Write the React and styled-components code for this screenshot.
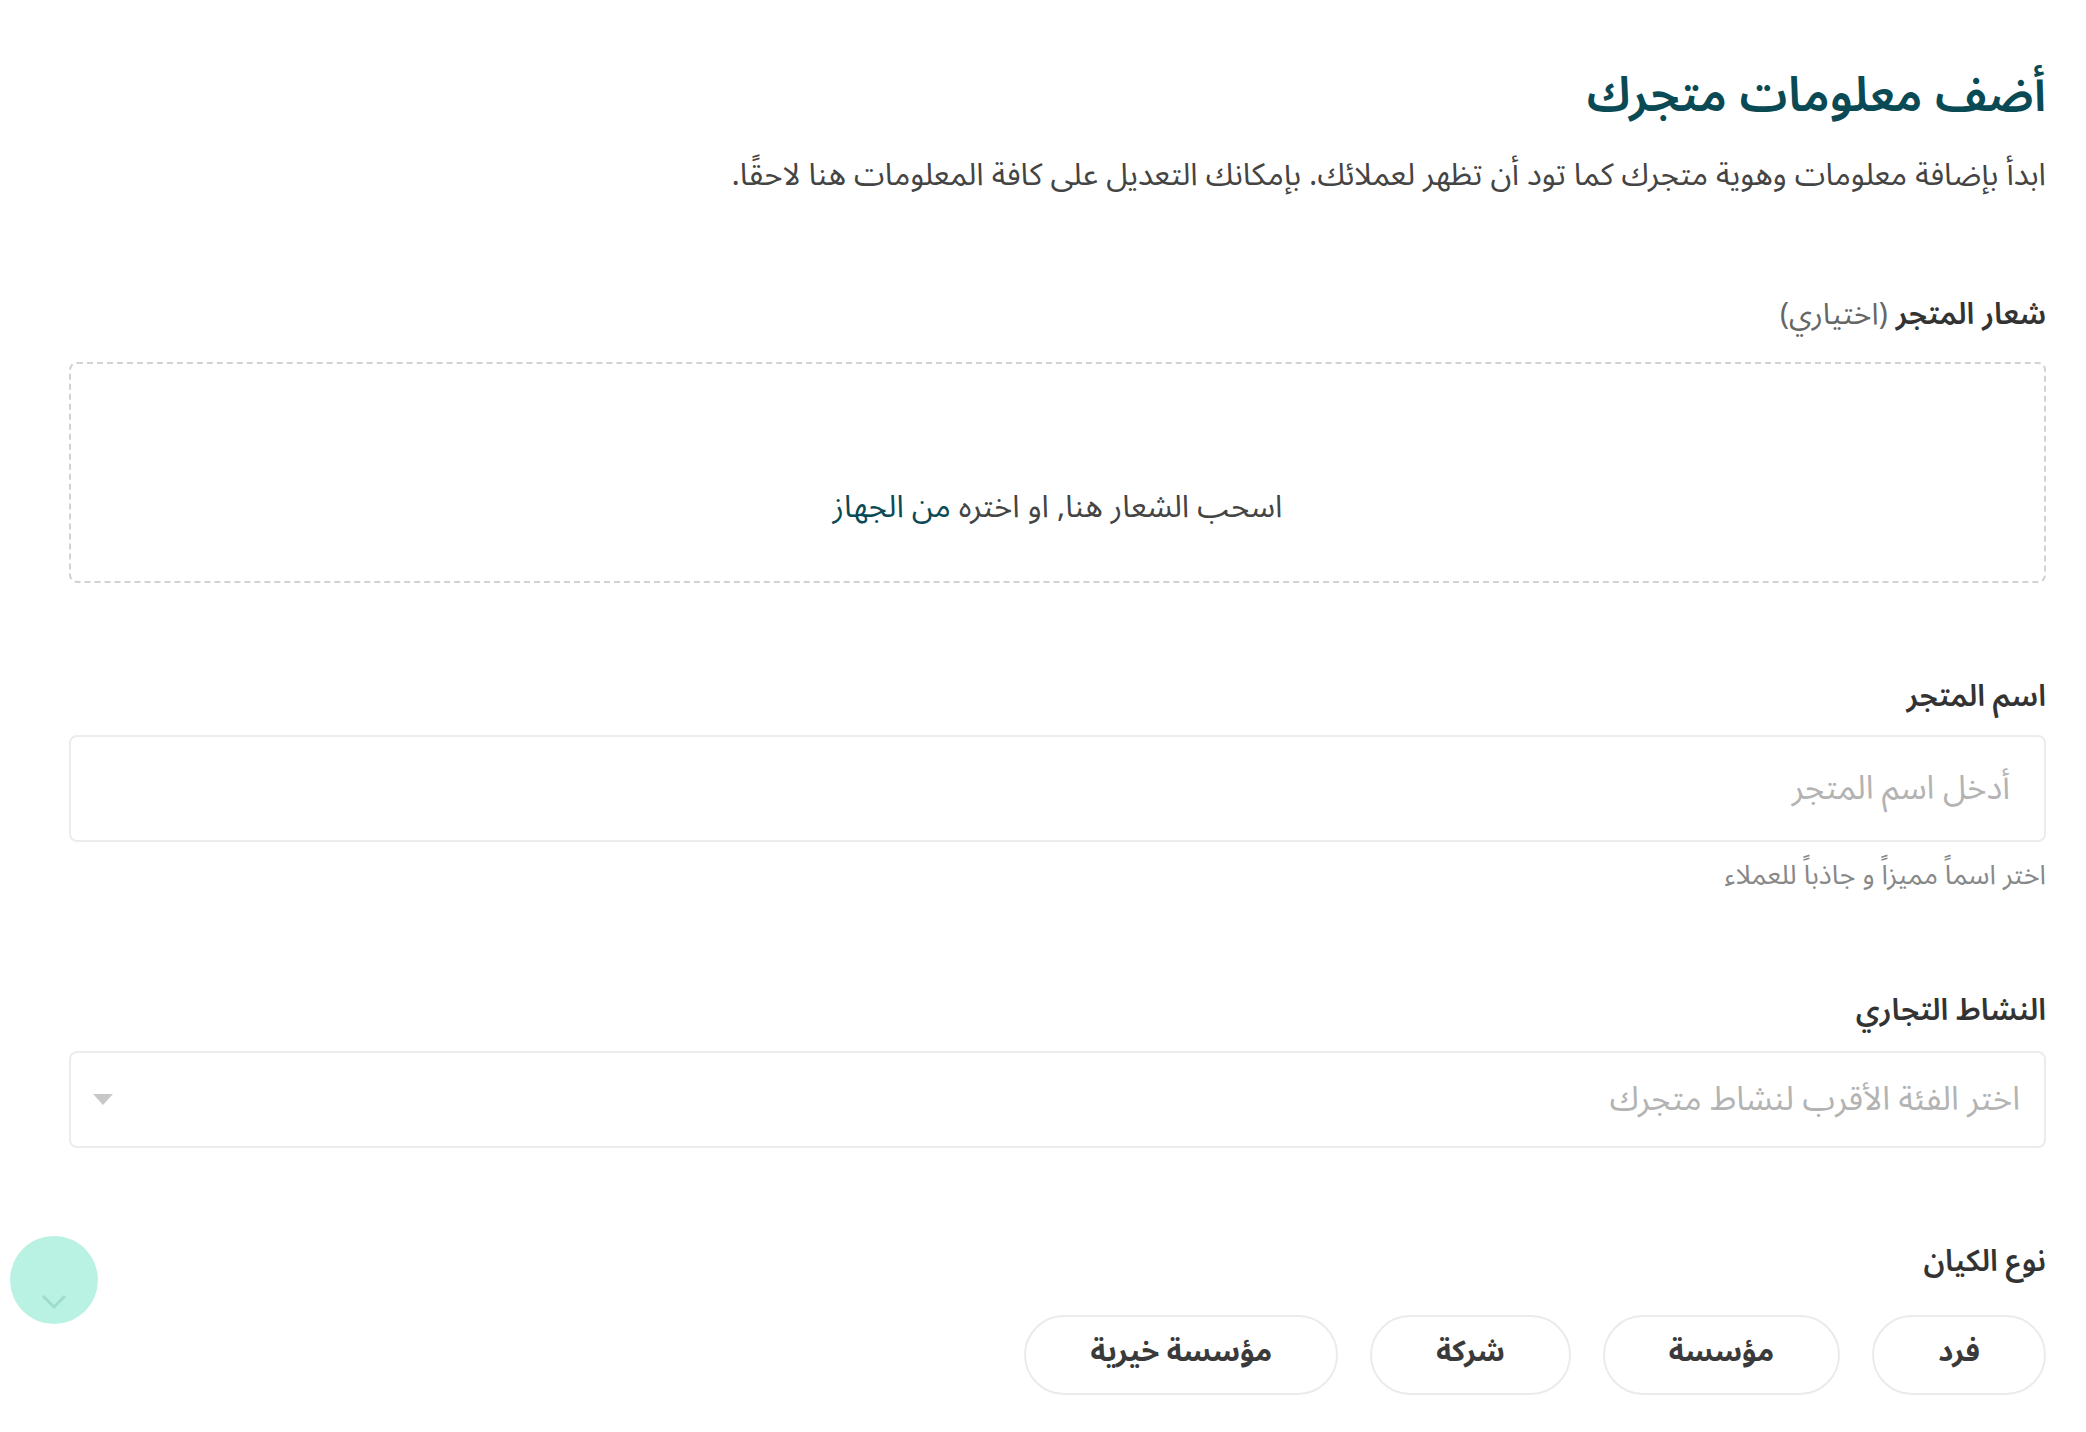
import React from "react";
import styled, { createGlobalStyle } from "styled-components";

const GlobalStyle = createGlobalStyle`
  html, body {
    margin: 0;
    padding: 0;
    background: #ffffff;
  }
  body {
    font-family: "Noto Sans Arabic", "Noto Sans", "DejaVu Sans", sans-serif;
    color: #333333;
  }
  * {
    box-sizing: border-box;
  }
`;

const Page = styled.div`
  direction: rtl;
  padding: 66px 40px 60px 69px;
  display: flex;
  flex-direction: column;
`;

const Title = styled.h1`
  margin: 0;
  font-size: 48px;
  line-height: 60px;
  font-weight: 600;
  color: #0a4a55;
`;

const Subtitle = styled.p`
  margin: 31px 0 0;
  font-size: 31px;
  line-height: 36px;
  color: #444444;
`;

const Field = styled.div`
  display: flex;
  flex-direction: column;
  margin-top: ${({ $top }) => $top}px;
`;

const Label = styled.label`
  font-size: 30px;
  line-height: 36px;
  font-weight: 600;
  color: #333333;
  margin-bottom: ${({ $gap }) => $gap}px;
`;

const Optional = styled.span`
  font-weight: 400;
  color: #666666;
  margin-right: 8px;
`;

const DropZone = styled.div`
  height: 221px;
  border: 2px dashed #d2d2d2;
  border-radius: 8px;
  display: flex;
  justify-content: center;
  padding-top: 125px;
  font-size: 31px;
  line-height: 36px;
  color: #444444;
`;

const Link = styled.span`
  color: #0a4a55;
  cursor: pointer;
`;

const TextInput = styled.input`
  direction: rtl;
  height: 107px;
  border: 2px solid #ececec;
  border-radius: 8px;
  padding: 0 34px;
  font-family: inherit;
  font-size: 33px;
  color: #333333;
  outline: none;
  &::placeholder {
    color: #b3b3b3;
  }
`;

const Hint = styled.div`
  margin-top: 19px;
  font-size: 27px;
  line-height: 30px;
  color: #888888;
`;

const SelectBox = styled.div`
  height: 97px;
  border: 2px solid #ececec;
  border-radius: 8px;
  display: flex;
  align-items: center;
  justify-content: space-between;
  padding: 0 24px 0 22px;
  font-size: 33px;
  color: #b3b3b3;
  cursor: pointer;
`;

const Caret = styled.span`
  width: 0;
  height: 0;
  border-left: 10px solid transparent;
  border-right: 10px solid transparent;
  border-top: 11px solid #c8c8c8;
`;

const Pills = styled.div`
  display: flex;
  gap: 32px;
`;

const Pill = styled.button`
  height: 80px;
  padding: 0 64px 8px;
  border: 2px solid #ebebeb;
  border-radius: 40px;
  background: #ffffff;
  font-family: inherit;
  font-size: 29px;
  font-weight: 700;
  color: #3a3a3a;
  cursor: pointer;
`;

const ScrollButton = styled.div`
  position: fixed;
  left: 10px;
  top: 1236px;
  width: 88px;
  height: 88px;
  border-radius: 50%;
  background: #b9f2e3;
  display: flex;
  justify-content: center;
  align-items: flex-end;
  padding-bottom: 14px;
`;

const entityTypes = ["فرد", "مؤسسة", "شركة", "مؤسسة خيرية"];

export default function App() {
  return (
    <>
      <GlobalStyle />
      <Page>
        <Title>أضف معلومات متجرك</Title>
        <Subtitle>
          ابدأ بإضافة معلومات وهوية متجرك كما تود أن تظهر لعملائك. بإمكانك التعديل على كافة المعلومات هنا لاحقًا.
        </Subtitle>

        <Field $top={104}>
          <Label $gap={29}>
            شعار المتجر<Optional>(اختياري)</Optional>
          </Label>
          <DropZone>
            <span>
              اسحب الشعار هنا, او اختره <Link>من الجهاز</Link>
            </span>
          </DropZone>
        </Field>

        <Field $top={96}>
          <Label $gap={20}>اسم المتجر</Label>
          <TextInput placeholder="أدخل اسم المتجر" />
          <Hint>اختر اسماً مميزاً و جاذباً للعملاء</Hint>
        </Field>

        <Field $top={102}>
          <Label $gap={22}>النشاط التجاري</Label>
          <SelectBox>
            <span>اختر الفئة الأقرب لنشاط متجرك</span>
            <Caret />
          </SelectBox>
        </Field>

        <Field $top={96}>
          <Label $gap={35}>نوع الكيان</Label>
          <Pills>
            {entityTypes.map((t) => (
              <Pill key={t}>{t}</Pill>
            ))}
          </Pills>
        </Field>
      </Page>

      <ScrollButton>
        <svg width="26" height="16" viewBox="0 0 26 16" fill="none">
          <path d="M2 2l11 11L24 2" stroke="#9edccd" strokeWidth="3" />
        </svg>
      </ScrollButton>
    </>
  );
}
